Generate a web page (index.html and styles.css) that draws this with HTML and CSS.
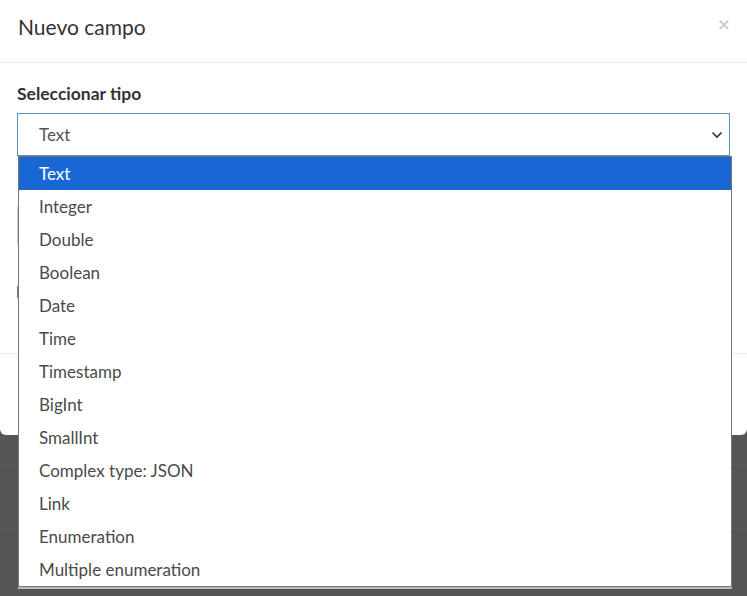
FILE: index.html
```html
<!doctype html>
<html>
<head>
	<title>Nuevo campo</title>
	<link rel="stylesheet" href="styles.css">
</head>
<body>
<div class="modal">
	<div class="modal-header">
		<h4 class="modal-title">Nuevo campo</h4>
		<span class="close">&times;</span>
	</div>
	<div class="modal-body">
		<label class="field-label">Seleccionar tipo</label>
		<div class="select">
			<span>Text</span>
			<svg class="chevron" width="12" height="8" viewBox="0 0 12 8"><path d="M1.5 1.5 L6 6 L10.5 1.5" fill="none" stroke="#333" stroke-width="1.6"/></svg>
		</div>
		<div class="input"></div>
		<div class="checkbox"></div>
	</div>
	<div class="modal-footer"></div>
</div>
<div class="backdrop-rows">
	<div class="row"></div>
	<div class="row"></div>
</div>

<ul class="options">
	<li class="selected">Text</li>
	<li>Integer</li>
	<li>Double</li>
	<li>Boolean</li>
	<li>Date</li>
	<li>Time</li>
	<li>Timestamp</li>
	<li>BigInt</li>
	<li>SmallInt</li>
	<li>Complex type: JSON</li>
	<li>Link</li>
	<li>Enumeration</li>
	<li>Multiple enumeration</li>
</ul>
</body>
</html>
```

FILE: styles.css
```css
body {margin: 0; background: #555555; font-family: Lato, "Open Sans", sans-serif; color: #333; height: 596px; overflow: hidden;}
.modal {background: #fff; border-radius: 0 0 6px 6px; height: 435px; box-sizing: border-box; display: flex; flex-direction: column;}
.modal-header {height: 63px; box-sizing: border-box; border-bottom: 1px solid #e9e9e9; padding: 13px 18px 0 18px; display: flex; justify-content: space-between; align-items: flex-start;}
.modal-title {margin: 0; font-size: 21px; font-weight: normal; line-height: 28px; color: #333;}
.close {font-size: 21px; font-weight: bold; color: #000; opacity: .2; line-height: 20px; margin-right: -1px; margin-top: 1px;}
.modal-body {padding: 20px 17px 0 17px; height: 290px; box-sizing: border-box;}
.field-label {display: block; font-size: 17.5px; font-weight: bold; line-height: 22px; margin-bottom: 8px; color: #333;}
.select {height: 43px; box-sizing: border-box; border: 1px solid #5b8db5; display: flex; align-items: center; justify-content: space-between; padding: 0 6px 0 21px; font-size: 17px; color: #555;}
.chevron {margin-top: 1px;}
.input {height: 44px; box-sizing: border-box; border: 1px solid #ccc; border-radius: 4px; margin-top: 48px;}
.checkbox {width: 14px; height: 14px; box-sizing: border-box; border: 1px solid #767676; border-radius: 2px; margin-top: 37px;}
.modal-footer {border-top: 1px solid #e9e9e9; flex: 1;}
.backdrop-rows {padding-top: 29px;}
.backdrop-rows .row {height: 63px; border-top: 1px solid #5c5c5c;}
.options {position: absolute; top: 156px; left: 18px; width: 714px; box-sizing: border-box; margin: 0; padding: 0; list-style: none; background: #fff; border: 1px solid #767676; box-shadow: 0 2px 0 #b9b9b9;}
.options li {height: 33px; line-height: 33px; padding-left: 20px; font-size: 17px; color: #4a4a4a;}
.options li.selected {background: #1967d2; color: #fff;}
```
